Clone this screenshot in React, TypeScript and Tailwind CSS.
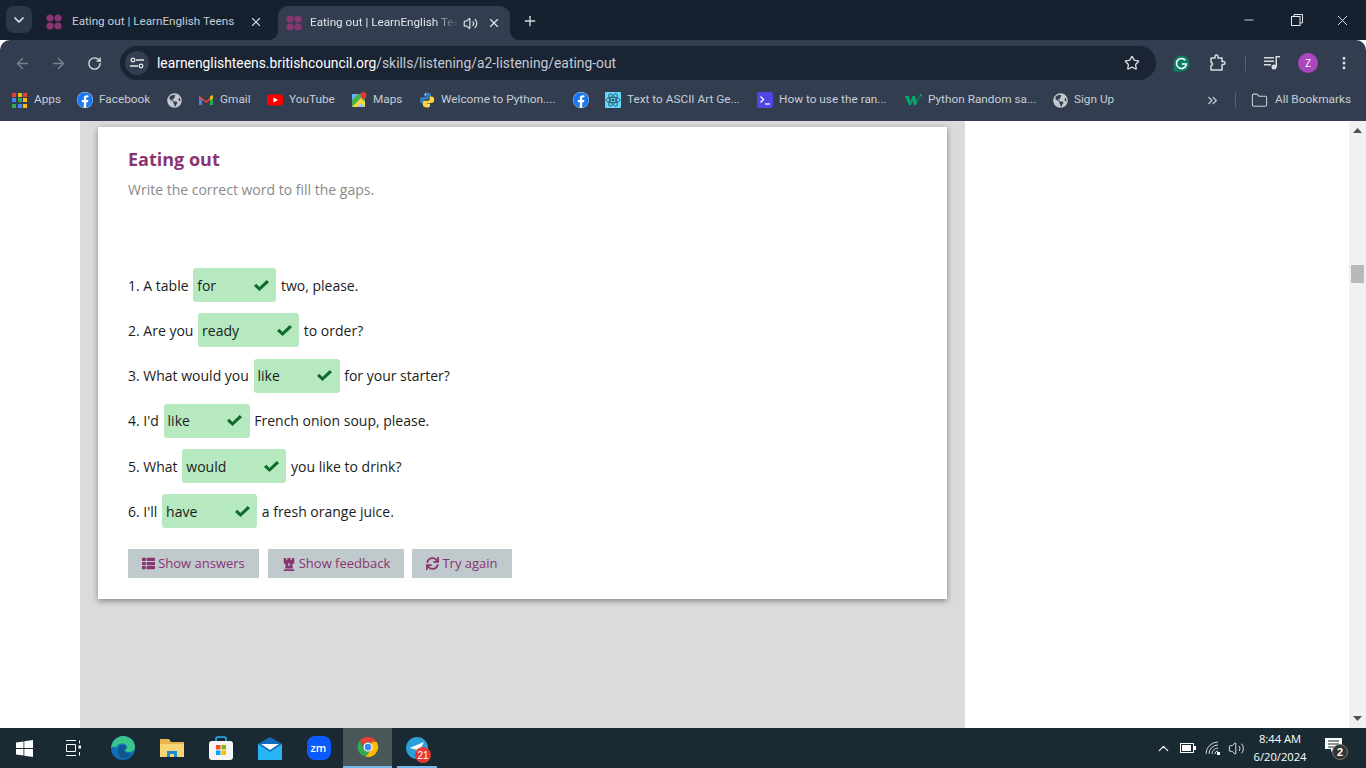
import { ArrowLeft, ArrowRight, RotateCw, Star, X, Plus, ChevronDown, Minus, Volume2, EllipsisVertical, ChevronsRight, Folder, ChevronUp } from "lucide-react";
import { FaThList, FaChessRook, FaSync, FaGlobeAmericas, FaFacebook } from "react-icons/fa";

const rows = [
  { before: "1. A table", word: "for", w: "w-[83px]", after: "two, please." },
  { before: "2. Are you", word: "ready", w: "w-[101px]", after: "to order?" },
  { before: "3. What would you", word: "like", w: "w-[86px]", after: "for your starter?" },
  { before: "4. I'd", word: "like", w: "w-[86px]", after: "French onion soup, please." },
  { before: "5. What", word: "would", w: "w-[104px]", after: "you like to drink?" },
  { before: "6. I'll", word: "have", w: "w-[95px]", after: "a fresh orange juice." },
];

function Favicon() {
  return (
    <svg width="16" height="16" viewBox="0 0 16 16" fill="#8a3572" className="shrink-0">
      <circle cx="4" cy="4" r="3.6" />
      <circle cx="12" cy="4" r="3.6" />
      <circle cx="4" cy="12" r="3.6" />
      <circle cx="12" cy="12" r="3.6" />
    </svg>
  );
}

function Fb() {
  return (
    <span className="flex h-4 w-4 shrink-0 items-center justify-center rounded-full bg-white">
      <FaFacebook size={16} color="#1877f2" />
    </span>
  );
}

function Globe() {
  return <FaGlobeAmericas size={15} color="#c4c7cc" className="shrink-0" />;
}

function Check() {
  return (
    <svg width="15" height="11" viewBox="0 0 15 11" fill="#0f6b2a" className="shrink-0">
      <path d="M0 6 2.200 3.800 5.500 7 12.700 0 15 2.200 5.500 11z" />
    </svg>
  );
}

function AppsGrid() {
  const c = ["#ea4335", "#fbbc04", "#ea4335", "#4285f4", "#34a853", "#fbbc04", "#34a853", "#4285f4", "#fbbc04"];
  return (
    <span className="mr-[1px] grid w-[15px] shrink-0 grid-cols-3 gap-[1.500px]">
      {c.map((x, i) => (
        <span key={i} className="h-[4px] w-[4px]" style={{ backgroundColor: x }} />
      ))}
    </span>
  );
}

function Gmail() {
  return (
    <svg width="16" height="16" viewBox="0 0 16 16" className="shrink-0">
      <path d="M1 4v9h3V7z" fill="#4285f4" />
      <path d="M15 4v9h-3V7z" fill="#34a853" />
      <path d="M1 3.500 8 9l7-5.500V5.500L8 11 1 5.500z" fill="#ea4335" />
      <path d="M12 4.500 15 3v3l-3 2.300z" fill="#fbbc04" />
    </svg>
  );
}

function Youtube() {
  return (
    <svg width="16" height="16" viewBox="0 0 16 16" className="shrink-0">
      <rect x="0" y="2.500" width="16" height="11" rx="3" fill="#f00" />
      <path d="M6.500 5.500v5L11 8z" fill="#fff" />
    </svg>
  );
}

function Maps() {
  return (
    <svg width="16" height="16" viewBox="0 0 16 16" className="shrink-0">
      <rect x="1" y="2" width="13" height="13" fill="#4caf50" />
      <path d="M1 15 10 6l4 4v5z" fill="#fdd835" />
      <path d="M1 2h6L1 8z" fill="#64b5f6" />
      <path d="M6 15l4-4 4 4z" fill="#90caf9" />
      <path d="M12.500 0a3 3 0 0 1 3 3c0 2-3 5-3 5s-3-3-3-5a3 3 0 0 1 3-3z" fill="#e53935" />
    </svg>
  );
}

function PythonLogo() {
  const half = "M8 .5C5 .5 5 2 5 3v1.500h3.200v.5H3.500C2 5 .8 6 .8 8.300s1 3.200 2.500 3.200H5V9.500c0-1.300 1-2.300 2.300-2.300h3c1 0 1.800-.8 1.800-1.800V3C12.100 1.500 10.600.5 8 .5z";
  return (
    <svg width="16" height="16" viewBox="0 0 16 16" className="shrink-0">
      <path d={half} fill="#3b7bb5" />
      <path d={half} fill="#ffd43b" transform="rotate(180 8 8)" />
      <circle cx="6.500" cy="2.500" r=".7" fill="#fff" />
      <circle cx="9.500" cy="13.500" r=".7" fill="#fff" />
    </svg>
  );
}

function ReactIcon() {
  return (
    <svg width="16" height="16" viewBox="0 0 16 16" className="shrink-0">
      <rect width="16" height="16" rx="1" fill="#61dafb" />
      <g fill="none" stroke="#21455a" strokeWidth="0.800">
        <ellipse cx="8" cy="8" rx="7" ry="2.800" />
        <ellipse cx="8" cy="8" rx="7" ry="2.800" transform="rotate(60 8 8)" />
        <ellipse cx="8" cy="8" rx="7" ry="2.800" transform="rotate(120 8 8)" />
      </g>
      <circle cx="8" cy="8" r="1.300" fill="#21455a" />
    </svg>
  );
}

function TermIcon() {
  return (
    <svg width="16" height="16" viewBox="0 0 16 16" className="shrink-0">
      <rect width="16" height="16" rx="2" fill="#5046e5" />
      <path d="M3.500 4.500 6.500 7.500 3.500 10.500" fill="none" stroke="#fff" strokeWidth="1.300" />
      <path d="M8 12h5" stroke="#fff" strokeWidth="1.300" />
    </svg>
  );
}

function W3() {
  return (
    <svg width="17" height="16" viewBox="0 0 17 16" className="shrink-0">
      <path d="M0 4h3.500l2 6 2-6h2.500l2 6 2-5.500h1L11 13H9L7.500 8.500 6 13H4z" fill="#04aa6d" />
      <path d="M14.500 2h2v2.500h-1.500z" fill="#04aa6d" />
    </svg>
  );
}

function Grammarly() {
  return (
    <svg width="17" height="17" viewBox="0 0 17 17" className="ml-[17px]">
      <path d="M8.500 .5a8 8 0 0 1 0 16H.5V8.500a8 8 0 0 1 8-8z" fill="#0d7c66" />
      <path d="M12.300 5.300A5 5 0 1 0 13.400 9H8.800" fill="none" stroke="#fff" strokeWidth="1.600" />
    </svg>
  );
}

function Mark({ className, children }: { className: string; children: React.ReactNode }) {
  return <div className={"flex h-[40px] w-[49px] shrink-0 items-center justify-center " + className}>{children}</div>;
}

function ChromeLogo() {
  return (
    <svg width="24" height="24" viewBox="0 0 48 48">
      <path d="M24 4a20 20 0 0 1 17.300 10H24a10 10 0 0 0-9.500 7L7.500 11.500A20 20 0 0 1 24 4z" fill="#ea4335" />
      <path d="M7.500 11.500 16.300 27a10 10 0 0 0 10 6.700L19.500 43.500A20 20 0 0 1 7.500 11.500z" fill="#34a853" />
      <path d="M41.300 14A20 20 0 0 1 19.500 43.500L29 30a10 10 0 0 0 3-9 10 10 0 0 0-2-7z" fill="#fbbc04" />
      <circle cx="24" cy="24" r="8" fill="#4285f4" stroke="#fff" strokeWidth="2.500" />
    </svg>
  );
}

function Taskbar() {
  return (
    <div className="flex h-[40px] shrink-0 items-center bg-[#1a2a33] text-white">
      <Mark className="">
        <svg width="17" height="17" viewBox="0 0 17 17" fill="#fff">
          <path d="M0 2.500 7.500 1.400v6.700H0zM8.300 1.300 17 0v8.100H8.300zM0 8.900h7.500v6.700L0 14.500zM8.300 8.900H17V17l-8.700-1.300z" />
        </svg>
      </Mark>
      <Mark className="">
        <svg width="17" height="16" viewBox="0 0 17 16" fill="none" stroke="#fff" strokeWidth="1">
          <path d="M1 .500h10M1 15.500h10M1.500 4.500h9v7h-9zM14.500 .500v3M14.500 12v3.500" />
          <rect x="13.500" y="5.500" width="2.500" height="3" fill="#fff" stroke="none" />
        </svg>
      </Mark>
      <Mark className="">
        <svg width="24" height="24" viewBox="0 0 24 24">
          <circle cx="12" cy="12" r="12" fill="#0f6fb8" />
          <path d="M0 12C1 4 7 0 12 0c7 0 12 5 12 11 0 4-3 5-6 5-2 0-4-1-4-2 2-1 3-3 1-5-3-3-9-1-10 3C4 10 2 10 0 12z" fill="#39c489" />
          <path d="M7 15c0-4 4-7 7-5 1 1 1 3-1 4 0 3 4 5 8 3-3 5-9 7-12 4-1-1-2-3-2-6z" fill="#16243a" opacity="0.350" />
        </svg>
      </Mark>
      <Mark className="">
        <svg width="24" height="20" viewBox="0 0 24 20">
          <path d="M0 1h9l2 3h13v15H0z" fill="#e9b44c" />
          <rect x="0" y="6" width="24" height="13" fill="#f7d774" />
          <path d="M7 19v-6h10v6h-3v-3h-4v3z" fill="#1c8ad4" />
        </svg>
      </Mark>
      <Mark className="">
        <svg width="24" height="24" viewBox="0 0 24 24">
          <path d="M7 6V3a2 2 0 0 1 2-2h6a2 2 0 0 1 2 2v3" fill="none" stroke="#29b6f6" strokeWidth="1.500" />
          <rect y="5" width="24" height="19" rx="3" fill="#f5f5f5" />
          <rect x="7" y="9" width="4.500" height="4.500" fill="#f25022" />
          <rect x="12.500" y="9" width="4.500" height="4.500" fill="#7fba00" />
          <rect x="7" y="14.500" width="4.500" height="4.500" fill="#00a4ef" />
          <rect x="12.500" y="14.500" width="4.500" height="4.500" fill="#ffb900" />
        </svg>
      </Mark>
      <Mark className="">
        <svg width="24" height="23" viewBox="0 0 24 23">
          <path d="M0 7 12 0l12 7v16H0z" fill="#0f6cbd" />
          <path d="M0 7l12 8 12-8v16H0z" fill="#29b6f6" />
          <path d="M3 7l9 6 9-6-9 0z" fill="#fff" />
        </svg>
      </Mark>
      <Mark className="">
        <span className="flex h-6 w-6 items-center justify-center rounded-[8px] bg-[#0b5cff] font-['Open_Sans',sans-serif] text-[11px] font-semibold text-white">zm</span>
      </Mark>
      <Mark className="border-b-[2px] border-[#76b9ed] bg-[#4a5759]">
        <ChromeLogo />
      </Mark>
      <Mark className="relative">
        <svg width="22" height="22" viewBox="0 0 22 22">
          <circle cx="11" cy="11" r="11" fill="#2b9fd8" />
          <path d="M3.500 11 18 5l-6 11-2-3.500z" fill="#fff" />
        </svg>
        <span className="absolute left-[23px] top-[19px] flex h-[16px] w-[16px] items-center justify-center rounded-full bg-[#e53935] font-['Liberation_Sans',sans-serif] text-[10px] text-white">21</span>
        <span className="absolute bottom-0 left-[5px] h-[2px] w-[40px] bg-[#76b9ed]" />
      </Mark>
      <div className="ml-auto flex items-center">
        <ChevronUp size={17} strokeWidth={1.500} className="mr-[8px]" />
        <svg width="16" height="10" viewBox="0 0 16 10" className="mr-[9px]">
          <rect x=".500" y=".500" width="13" height="9" fill="none" stroke="#fff" />
          <rect x="2" y="2" width="9" height="6" fill="#fff" />
          <rect x="14" y="3" width="2" height="4" fill="#fff" />
        </svg>
        <svg width="16" height="14" viewBox="0 0 16 14" fill="none" stroke="#cfd4d6" strokeWidth="1" className="mr-[7px]">
          <path d="M1 13A12 12 0 0 1 13 1M4 13a9 9 0 0 1 9-9M7 13a6 6 0 0 1 6-6M10 13a3 3 0 0 1 3-3" />
          <rect x="12" y="11" width="3" height="3" fill="#fff" stroke="none" />
        </svg>
        <Volume2 size={17} strokeWidth={1.200} />
        <div className="w-[70px] text-center font-['Open_Sans',sans-serif] text-[11.200px] leading-[18px]">
          <div>8:44 AM</div>
          <div className="whitespace-nowrap">6/20/2024</div>
        </div>
        <div className="relative ml-[10px] mr-[24px] h-[20px] w-[17px]">
          <svg width="17" height="15" viewBox="0 0 17 15" fill="#fff">
            <path d="M0 0h17v11H9l-3 3v-3H0z" />
            <path d="M3 3h11M3 6h11M3 9h7" stroke="#1a2a33" strokeWidth="1" />
          </svg>
          <span className="absolute left-[7px] top-[6px] flex h-[16px] w-[16px] items-center justify-center rounded-full border border-[#777] bg-[#333] font-['Liberation_Sans',sans-serif] text-[11px] font-bold">2</span>
        </div>
      </div>
    </div>
  );
}

function Bookmark({ icon, label, w }: { icon: React.ReactNode; label: string; w: string }) {
  return (
    <div className="flex items-center gap-[6px]">
      {icon}
      <span className={"whitespace-nowrap " + w}>{label}</span>
    </div>
  );
}

export default function App() {
  return (
    <div className="flex h-[768px] w-[1366px] flex-col overflow-hidden bg-white font-['Open_Sans',sans-serif]">
      {/* tabs */}
      <div className="flex h-[40px] shrink-0 bg-[#162130] font-['Roboto',sans-serif] text-[11.700px] text-[#c7cdd6]">
        <div className="ml-[6px] mt-[6px] flex h-[27px] w-[26px] items-center justify-center rounded-[8px] bg-[#2c3747]">
          <ChevronDown size={16} color="#e5e7eb" strokeWidth={2.500} />
        </div>
        <div className="ml-[14px] flex h-[34px] w-[232px] items-center self-end pb-[2px]">
          <Favicon />
          <span className="ml-[10px] w-[165px] whitespace-nowrap">Eating out | LearnEnglish Teens</span>
          <X size={14} color="#d5d9df" className="ml-[12px]" />
        </div>
        <div className="relative flex h-[34px] w-[232px] items-center self-end rounded-t-[10px] bg-[#323e4f] pl-[8px] text-[#e3e6ea]">
          <span className="absolute -left-[10px] bottom-0 h-[10px] w-[10px] bg-[radial-gradient(circle_at_0_0,#162130_10px,#323e4f_10.500px)]" />
          <span className="absolute -right-[10px] bottom-0 h-[10px] w-[10px] bg-[radial-gradient(circle_at_100%_0,#162130_10px,#323e4f_10.500px)]" />
          <Favicon />
          <span className="ml-[8px] w-[147px] overflow-hidden whitespace-nowrap [mask-image:linear-gradient(to_right,black_85%,transparent)]">Eating out | LearnEnglish Teens</span>
          <Volume2 size={15} color="#d5d9df" className="ml-[6px]" />
          <X size={14} color="#e3e6ea" className="ml-[9px]" />
        </div>
        <Plus size={16} color="#d5d9df" className="ml-[12px] mt-[13px]" />
        <div className="ml-auto flex items-center">
          <Minus size={14} color="#e5e7eb" strokeWidth={1.500} className="mr-[35px]" />
          <svg width="12" height="12" viewBox="0 0 12 12" fill="none" stroke="#e5e7eb" className="mr-[31px]">
            <rect x=".500" y="2.500" width="8.500" height="9" />
            <path d="M3 2.500V.500h8.500V9H9" />
          </svg>
          <X size={17} color="#e5e7eb" strokeWidth={1.300} className="mr-[15px]" />
        </div>
      </div>

      {/* toolbar */}
      <div className="flex h-[44px] shrink-0 items-start rounded-t-[10px] bg-[#323e4f] pt-[6px]">
        <div className="flex h-[34px] items-center">
          <ArrowLeft size={17} color="#778190" className="ml-[14px]" />
          <ArrowRight size={17} color="#778190" className="ml-[19px]" />
          <RotateCw size={15} color="#d7dade" strokeWidth={2.200} className="ml-[20px]" />
        </div>
        <div className="ml-[18px] flex h-[34px] w-[1036px] items-center rounded-full bg-[#1a2433]">
          <span className="ml-[5px] flex h-[24px] w-[24px] items-center justify-center rounded-full bg-[#323e4f]">
            <svg width="14" height="12" viewBox="0 0 14 12" fill="none" stroke="#e5e7eb" strokeWidth="1.300">
              <circle cx="3" cy="3" r="1.800" />
              <path d="M6 3h8M0 9h8" />
              <circle cx="11" cy="9" r="1.800" />
            </svg>
          </span>
          <span className="ml-[8px] whitespace-nowrap font-['Roboto',sans-serif] text-[13.850px] text-white">
            learnenglishteens.britishcouncil.org<span className="text-[#c5cad2]">/skills/listening/a2-listening/eating-out</span>
          </span>
          <Star size={16} color="#d7dade" strokeWidth={2} className="ml-auto mr-[16px]" />
        </div>
        <div className="flex h-[34px] items-center">
          <Grammarly />
          <svg width="18" height="18" viewBox="0 0 18 18" fill="none" stroke="#d7dade" strokeWidth="1.500" className="ml-[19px]">
            <path d="M2 4h4V2.500a1.500 1.500 0 0 1 3 0V4h4v3.500h1.500a1.500 1.500 0 0 1 0 3H13V16H2v-4.500a1.500 1.500 0 0 0 0-3z" strokeLinejoin="round" />
          </svg>
          <span className="ml-[18px] h-[16px] w-[1px] bg-[#566171]" />
          <svg width="16" height="14" viewBox="0 0 16 14" className="ml-[18px]" fill="#d7dade">
            <path d="M0 1h10v1.500H0zM0 4.500h10V6H0zM0 8h7v1.500H0z" />
            <circle cx="10" cy="11" r="2.500" />
            <path d="M11.500 0H16v1.500h-3V11h-1.500z" />
          </svg>
          <span className="ml-[18px] flex h-[20px] w-[20px] items-center justify-center rounded-full bg-[#ab47bc] text-[10px] text-white">Z</span>
          <EllipsisVertical size={16} color="#d7dade" strokeWidth={2.500} className="ml-[18px]" />
        </div>
      </div>

      {/* bookmarks */}
      <div className="flex h-[37px] shrink-0 items-center bg-[#323e4f] pb-[5px] pl-[12px] font-['Roboto',sans-serif] text-[11.800px] text-[#c7cdd6]">
        <div className="flex items-center gap-[16px]">
          <Bookmark icon={<AppsGrid />} label="Apps" w="w-[27px]" />
          <Bookmark icon={<Fb />} label="Facebook" w="w-[52px]" />
          <Globe />
          <Bookmark icon={<Gmail />} label="Gmail" w="w-[31px]" />
          <Bookmark icon={<Youtube />} label="YouTube" w="w-[46px]" />
          <Bookmark icon={<Maps />} label="Maps" w="w-[30px]" />
          <Bookmark icon={<PythonLogo />} label="Welcome to Python...." w="w-[116px]" />
          <Fb />
          <Bookmark icon={<ReactIcon />} label="Text to ASCII Art Ge..." w="w-[114px]" />
          <Bookmark icon={<TermIcon />} label="How to use the ran..." w="w-[110px]" />
          <Bookmark icon={<W3 />} label="Python Random sa..." w="w-[109px]" />
          <Bookmark icon={<Globe />} label="Sign Up" w="w-[42px]" />
        </div>
        <ChevronsRight size={15} color="#c7cdd6" strokeWidth={2.200} className="ml-[89px]" />
        <span className="ml-[15px] h-[16px] w-[1px] bg-[#566171]" />
        <Folder size={17} color="#c7cdd6" strokeWidth={1.500} className="ml-[15px]" />
        <span className="ml-[7px] whitespace-nowrap">All Bookmarks</span>
      </div>

      {/* page */}
      <div className="flex min-h-0 flex-1">
        <div className="w-[80px] shrink-0 bg-white" />
        <div className="w-[885px] shrink-0 bg-[#dbdbdb] pl-[18px] pt-[6px]">
          <div className="h-[472px] w-[849px] bg-white px-[30px] pt-[20px] shadow-[0_2px_6px_rgba(0,0,0,0.4)]">
            <h1 className="text-[18px] font-bold leading-[24px] text-[#8a3572]">Eating out</h1>
            <p className="mt-[9px] text-[14px] leading-[20px] text-[#8a8a8a]">Write the correct word to fill the gaps.</p>
            <div className="mt-[68px] flex flex-col gap-[11.250px] text-[14px] text-[#1c1c1c]">
              {rows.map((r) => (
                <div key={r.before} className="flex h-[34px] items-center gap-[4.700px]">
                  <span>{r.before}</span>
                  <span className={"flex h-[34px] items-center justify-between rounded-[3px] bg-[#b6e9bf] pl-[4px] pr-[7.500px] " + r.w}>
                    <span>{r.word}</span>
                    <Check />
                  </span>
                  <span>{r.after}</span>
                </div>
              ))}
            </div>
            <div className="mt-[21px] flex text-[13px] text-[#8a3572]">
              <button className="flex h-[29px] w-[131px] items-center justify-center gap-[3px] bg-[#c0c9cc]">
                <FaThList size={13} />
                Show answers
              </button>
              <button className="ml-[9px] flex h-[29px] w-[136px] items-center justify-center gap-[3px] bg-[#c0c9cc]">
                <FaChessRook size={14} />
                Show feedback
              </button>
              <button className="ml-[8px] flex h-[29px] w-[100px] items-center justify-center gap-[3px] bg-[#c0c9cc]">
                <FaSync size={13} />
                Try again
              </button>
            </div>
          </div>
        </div>
        <div className="flex-1 bg-white" />
        <div className="flex w-[17px] shrink-0 flex-col items-center bg-[#f1f1f1] pt-[7px]">
          <svg width="9" height="5" viewBox="0 0 9 5" fill="#505050"><path d="M4.500 0 9 5H0z" /></svg>
          <div className="mt-[132px] h-[18px] w-[13px] bg-[#b9b9b9]" />
          <svg width="9" height="5" viewBox="0 0 9 5" fill="#505050" className="mb-[7px] mt-auto"><path d="M4.500 5 9 0H0z" /></svg>
        </div>
      </div>
      <Taskbar />
    </div>
  );
}
